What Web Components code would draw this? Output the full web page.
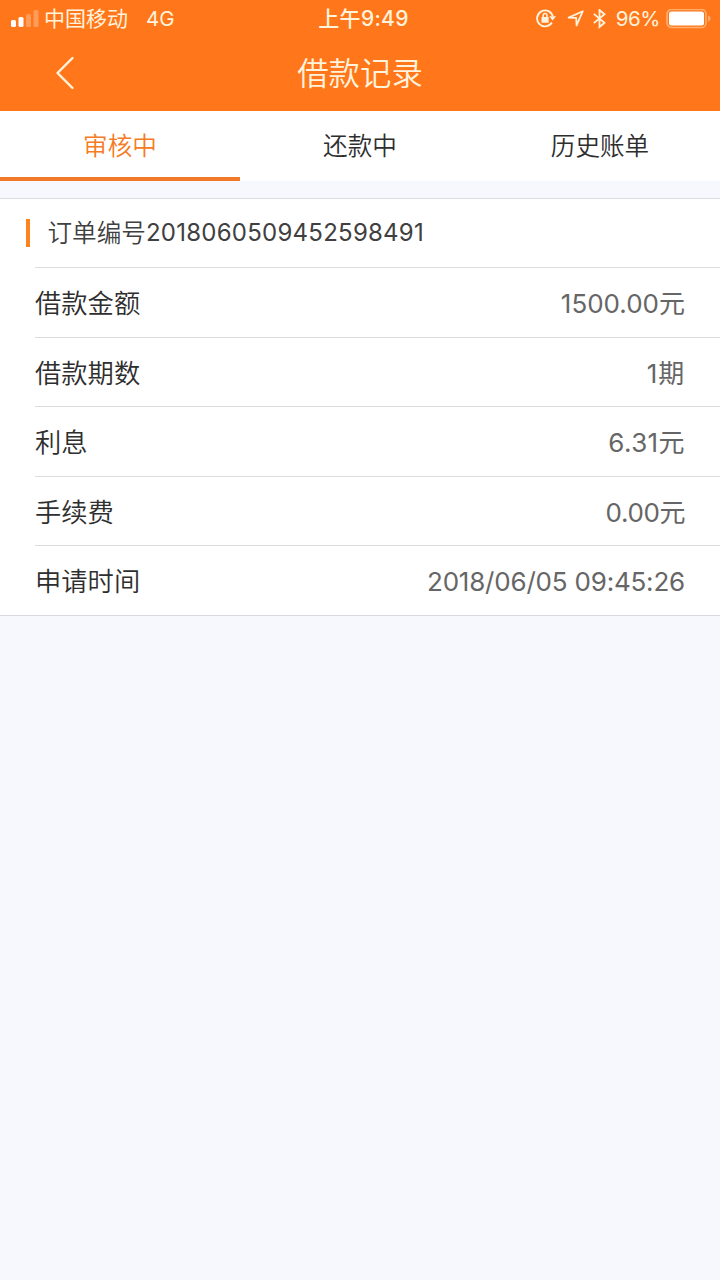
<!DOCTYPE html>
<html lang="zh-CN">
<head>
<meta charset="utf-8">
<title>借款记录</title>
<style>
	html, body {
		margin: 0;
		padding: 0;
	}

	body {
		min-height: 1280px;
		background: #f7f8fd;
		font-family: Inter, "Noto Sans CJK SC", sans-serif;
		font-weight: 350;
		color: #2e2e2e;
	}
</style>
</head>
<body>
<loan-records></loan-records>

<script>
const statusBarTemplate = document.createElement('template')
statusBarTemplate.innerHTML = `
	<style>
		:host {
			display: grid;
			grid-template-columns: 1fr auto 1fr;
			align-items: center;
			height: 37px;
			padding: 0 9px 0 11px;
			color: #fff3dc;
			font-size: 20.5px;
			font-weight: 400;
			line-height: 37px;
			white-space: nowrap;
		}

		.left, .right {
			display: flex;
			align-items: center;
		}

		.right {
			justify-content: flex-end;
		}

		svg {
			display: block;
			flex: none;
		}

		.carrier {
			margin-left: 5px;
			font-size: 21px;
			line-height: 36px;
		}

		.network {
			margin-left: 18px;
			font-size: 20.5px;
		}

		.time {
			padding-left: 5px;
			font-size: 21px;
			font-weight: 500;
			letter-spacing: .3px;
			line-height: 36px;
		}

		.lock { margin-right: 11px; }
		.arrow { margin-right: 9px; }
		.bluetooth { margin-right: 10px; }

		.percent {
			margin-right: 6px;
			letter-spacing: -.4px;
			line-height: 36px;
		}
	</style>
	<div class="left">
		<svg width="28" height="18" viewBox="0 0 28 18" fill="#fff">
			<rect x="0" y="10" width="5" height="7" rx="1.5"/>
			<rect x="7.5" y="7" width="5" height="10" rx="1.5"/>
			<rect x="15" y="4" width="5" height="13" rx="1.5" opacity=".28"/>
			<rect x="22.5" y="0" width="5" height="17" rx="1.5" opacity=".28"/>
		</svg>
		<span class="carrier">中国移动</span>
		<span class="network">4G</span>
	</div>
	<span class="time">上午9:49</span>
	<div class="right">
		<svg class="lock" width="20" height="20" viewBox="0 0 20 20" fill="none" stroke="#fff3dc">
			<path d="M15.9 13.6A8 8 0 1 1 16.9 7.6" stroke-width="1.9"/>
			<path d="M13.2 7.2H20L16.6 11.5Z" fill="#fff3dc" stroke="none"/>
			<rect x="5.5" y="8" width="7.2" height="5.8" rx=".6" fill="#fff3dc" stroke="none"/>
			<path d="M7.2 8V6.4a1.9 1.9 0 0 1 3.8 0V8" stroke-width="1.5"/>
		</svg>
		<svg class="arrow" width="17" height="17" viewBox="0 0 17 17" fill="none" stroke="#fff3dc" stroke-width="1.8" stroke-linejoin="round">
			<path d="M15.8 1.2L1.6 7.6L9.2 7.8L9.6 15.4Z"/>
		</svg>
		<svg class="bluetooth" width="13" height="20" viewBox="0 0 13 20" fill="none" stroke="#fff3dc" stroke-width="1.8">
			<path d="M.8 4.9L11.5 13.8L6.5 18V1L11.5 5.2L.8 14.1"/>
		</svg>
		<span class="percent">96%</span>
		<svg width="45" height="20" viewBox="0 0 45 20">
			<rect x="1" y=".5" width="39" height="18" rx="4.5" fill="none" stroke="#ffad6c" stroke-width="1.7"/>
			<rect x="3" y="2.5" width="35" height="14" rx="2.5" fill="#fff"/>
			<path d="M42 6.3Q44.6 7.5 44.6 9.5T42 12.7Z" fill="#ffad6c"/>
		</svg>
	</div>
`

class StatusBar extends HTMLElement {
	constructor() {
		super()
		this.attachShadow({ mode: 'open' })
		this.shadowRoot.appendChild(statusBarTemplate.content.cloneNode(true))
	}
}

window.customElements.define('status-bar', StatusBar)

const navBarTemplate = document.createElement('template')
navBarTemplate.innerHTML = `
	<style>
		:host {
			display: grid;
			grid-template-columns: 130px 1fr 130px;
			align-items: center;
			height: 74px;
			color: #fff3dc;
		}

		button {
			justify-self: start;
			margin: 0 0 2px 55px;
			padding: 0;
			border: 0;
			background: none;
		}

		svg {
			display: block;
		}

		h1 {
			margin: 0;
			font-size: 31.4px;
			font-weight: 350;
			line-height: 74px;
			text-align: center;
		}
	</style>
	<button aria-label="返回">
		<svg width="21" height="34" viewBox="0 0 21 34" fill="none" stroke="#fff3dc" stroke-width="2.4" stroke-linecap="round" stroke-linejoin="round">
			<path d="M17.5 2L2.5 17L17.5 32"/>
		</svg>
	</button>
	<h1><slot></slot></h1>
`

class NavBar extends HTMLElement {
	constructor() {
		super()
		this.attachShadow({ mode: 'open' })
		this.shadowRoot.appendChild(navBarTemplate.content.cloneNode(true))
	}
}

window.customElements.define('nav-bar', NavBar)

const tabItemTemplate = document.createElement('template')
tabItemTemplate.innerHTML = `
	<style>
		:host {
			display: block;
			box-sizing: border-box;
			flex: 1;
			height: 70px;
			border-bottom: 4px solid transparent;
			font-size: 24.6px;
			line-height: 70px;
			text-align: center;
		}

		:host([active]) {
			color: #f57b25;
			border-color: #f07a2a;
		}
	</style>
	<slot></slot>
`

class TabItem extends HTMLElement {
	constructor() {
		super()
		this.attachShadow({ mode: 'open' })
		this.shadowRoot.appendChild(tabItemTemplate.content.cloneNode(true))
	}
}

window.customElements.define('tab-item', TabItem)

const detailRowTemplate = document.createElement('template')
detailRowTemplate.innerHTML = `
	<style>
		:host {
			display: flex;
			justify-content: space-between;
			box-sizing: border-box;
			height: 69.6px;
			margin-left: 35px;
			padding-right: 35px;
			border-top: 1px solid #dcdde0;
			font-size: 26.3px;
			line-height: 72px;
		}

		.value {
			color: #666;
			font-size: 26px;
			font-weight: 400;
			letter-spacing: var(--value-spacing, 0);
			line-height: 71px;
		}
	</style>
	<span><slot name="label"></slot></span>
	<span class="value"><slot></slot></span>
`

class DetailRow extends HTMLElement {
	constructor() {
		super()
		this.attachShadow({ mode: 'open' })
		this.shadowRoot.appendChild(detailRowTemplate.content.cloneNode(true))
	}
}

window.customElements.define('detail-row', DetailRow)

const orderCardTemplate = document.createElement('template')
orderCardTemplate.innerHTML = `
	<style>
		:host {
			display: block;
			margin-top: 17px;
			background: #fff;
			border-top: 1px solid #dcdce3;
			border-bottom: 1px solid #d9d9df;
		}

		header {
			display: flex;
			align-items: center;
			height: 68px;
			padding-left: 26px;
			color: #404040;
			font-size: 24.6px;
			line-height: 70px;
		}

		header::before {
			content: "";
			width: 4px;
			height: 28px;
			margin-right: 17.5px;
			background: #ff8420;
		}

		.number {
			font-size: 24px;
			font-weight: 400;
			letter-spacing: .25px;
		}
	</style>
	<header>
		<span>订单编号</span><span class="number"><slot name="number"></slot></span>
	</header>
	<slot></slot>
`

class OrderCard extends HTMLElement {
	constructor() {
		super()
		this.attachShadow({ mode: 'open' })
		this.shadowRoot.appendChild(orderCardTemplate.content.cloneNode(true))
	}
}

window.customElements.define('order-card', OrderCard)

const loanRecordsTemplate = document.createElement('template')
loanRecordsTemplate.innerHTML = `
	<style>
		:host {
			display: block;
		}

		.top {
			background: #ff771a;
		}

		nav {
			display: flex;
			background: #fff;
		}

		.periods { --value-spacing: .8px; }
		.interest { --value-spacing: .4px; }
		.fee { --value-spacing: -.4px; }
		.date { --value-spacing: -.2px; }
	</style>
	<div class="top">
		<status-bar></status-bar>
		<nav-bar>借款记录</nav-bar>
	</div>
	<nav>
		<tab-item active>审核中</tab-item>
		<tab-item>还款中</tab-item>
		<tab-item>历史账单</tab-item>
	</nav>
	<order-card>
		<span slot="number">2018060509452598491</span>
		<detail-row><span slot="label">借款金额</span>1500.00元</detail-row>
		<detail-row class="periods"><span slot="label">借款期数</span>1期</detail-row>
		<detail-row class="interest"><span slot="label">利息</span>6.31元</detail-row>
		<detail-row class="fee"><span slot="label">手续费</span>0.00元</detail-row>
		<detail-row class="date"><span slot="label">申请时间</span>2018/06/05 09:45:26</detail-row>
	</order-card>
`

class LoanRecords extends HTMLElement {
	constructor() {
		super()
		this.attachShadow({ mode: 'open' })
		this.shadowRoot.appendChild(loanRecordsTemplate.content.cloneNode(true))
	}
}

window.customElements.define('loan-records', LoanRecords)
</script>
</body>
</html>
